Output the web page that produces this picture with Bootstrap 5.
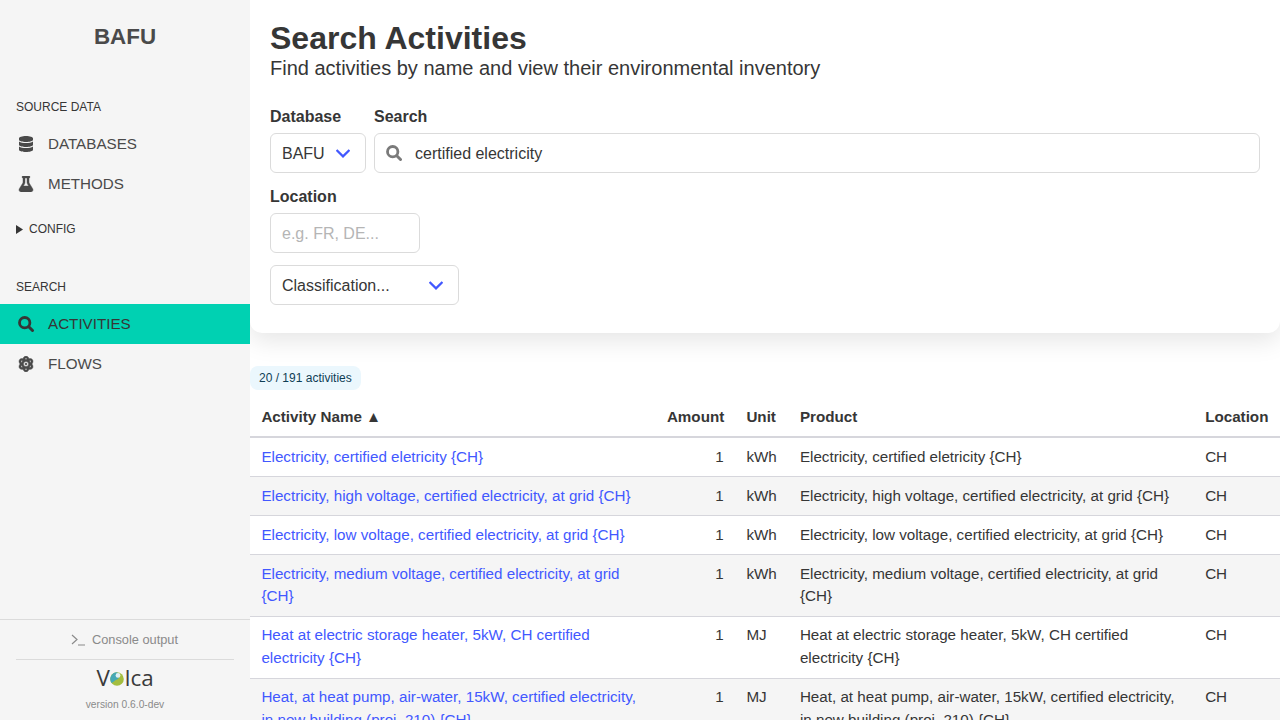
<!DOCTYPE html>
<html lang="en">
<head>
    <meta charset="UTF-8">
    <meta name="viewport" content="width=device-width, initial-scale=1.0">
    <title>Search Activities</title>
    <link rel="stylesheet" href="https://cdn.jsdelivr.net/npm/bootstrap@5.3.0/dist/css/bootstrap.min.css">
    <style>
        html, body {
            height: 100%;
            overflow: hidden;
        }
        body {
            font-family: "Liberation Sans", Arial, sans-serif;
            color: #363636;
            background: #fff;
            font-size: 16px;
            text-rendering: optimizeLegibility;
            -webkit-font-smoothing: antialiased;
        }
        .app-shell {
            height: 720px;
        }
        .side {
            width: 250px;
            background: #f5f5f5;
            color: #4a4a4a;
            position: relative;
            z-index: 1;
        }
        .brand {
            font-size: 22.4px;
            font-weight: 700;
            line-height: 26px;
            padding-top: 24px;
            margin-bottom: 50px;
            color: #4a4a4a;
        }
        .side-label {
            font-size: 12px;
            line-height: 14px;
            padding-left: 16px;
            margin-bottom: 10px;
            color: #363636;
        }
        .side-link {
            height: 40px;
            padding-left: 16px;
            gap: 12px;
            font-size: 15.2px;
            color: #4a4a4a;
            text-decoration: none;
        }
        .side-link svg {
            width: 20px;
            height: 16px;
            fill: #4a4a4a;
        }
        .side-link svg.icon-heavy {
            stroke: #4a4a4a;
            stroke-width: 14;
        }
        .side-link.is-on {
            background: #00d1b2;
            color: #363636;
        }
        .side-link.is-on svg {
            fill: none;
            stroke: #363636;
        }
        .side-config {
            font-size: 12px;
            line-height: 14px;
            padding-left: 16px;
            gap: 5px;
            margin-top: 18px;
            margin-bottom: 44px;
            color: #363636;
        }
        .side-foot {
            border-top: 1px solid #dbdbdb;
            padding: 0 16px;
        }
        .console-line {
            height: 40px;
            gap: 7px;
            padding-right: 1px;
            font-size: 12.8px;
            color: #8a8a8a;
            border-bottom: 1px solid #dbdbdb;
        }
        .logo-line {
            padding-top: 2px;
            height: 35px;
            font-family: "Open Sans", "Liberation Sans", sans-serif;
            font-size: 22.4px;
            line-height: 32px;
            color: #3a3a3a;
        }
        .logo-ball {
            width: 14px;
            height: 14px;
            margin: 0 1px 0 0;
            align-self: center;
        }
        .version-line {
            font-size: 10.24px;
            line-height: 12px;
            color: #8a8a8a;
            padding-top: 4px;
            height: 25px;
        }
        .main-area {
            width: 1030px;
            height: 720px;
            overflow-y: auto;
            scrollbar-width: none;
        }
        .search-box {
            height: 333px;
            padding: 20px 20px 0;
            border-radius: 0 0 12px 12px;
            box-shadow: 0 8px 24px rgba(10, 10, 10, .1);
            background: #fff;
        }
        .page-title {
            font-size: 32px;
            line-height: 36px;
            font-weight: 700;
            margin: 0;
            color: #363636;
        }
        .page-sub {
            font-size: 20px;
            line-height: 24px;
            margin: 0 0 25px;
            color: #363636;
        }
        .field-label {
            display: block;
            font-weight: 700;
            line-height: 24px;
            margin-bottom: 4px;
        }
        .field-box {
            height: 40px;
            border: 1px solid #dbdbdb;
            border-radius: 6px;
            background: #fff;
            padding: 1px 11px 0;
            line-height: 38px;
            color: #363636;
            box-shadow: none;
        }
        .field-box::placeholder {
            color: #b5b5b5;
        }
        .field-pick {
            padding-right: 15px;
        }
        .db-pick {
            width: 96px;
        }
        .class-pick {
            width: 189px;
            margin-top: 4px;
        }
        .loc-input {
            width: 150px;
            margin-bottom: 8px;
            outline: none;
        }
        .chev {
            width: 14px;
            height: 9px;
            fill: none;
            stroke: #4258ff;
            stroke-width: 2.2;
        }
        .search-input {
            padding-left: 40px;
            width: 100%;
            outline: none;
        }
        .search-glass {
            position: absolute;
            left: 12px;
            top: 12px;
            width: 16px;
            height: 16px;
            fill: none;
            stroke: #7a7a7a;
        }
        .filter-row {
            margin-bottom: 12px;
        }
        .count-tag {
            background: #ebf7fd;
            color: #0f3e55;
            font-size: 12px;
            line-height: 24px;
            height: 24px;
            padding: 0 9px;
            border-radius: 8px;
        }
        .count-row {
            padding-top: 33px;
            height: 65px;
        }
        .act-table {
            table-layout: fixed;
            width: 1030px;
            border-collapse: collapse;
            font-size: 15.2px;
            line-height: 22.8px;
            margin: 0;
            color: #363636;
        }
        .act-table th {
            font-weight: 700;
            padding: 7.6px 11.4px;
            border-bottom: 2px solid #d6d6dc;
        }
        .act-table td {
            padding: 7.6px 11.4px;
            border-bottom: 1px solid #d6d6dc;
            vertical-align: top;
        }
        .act-table tbody tr:nth-child(even) td {
            background: #f5f5f5;
        }
        .act-table a {
            color: #4258ff;
            text-decoration: none;
        }
        .c-name { width: 405.5px; }
        .c-amount { width: 79.5px; }
        .c-unit { width: 53.5px; }
        .c-product { width: 405.25px; }
        .c-loc { width: 86.25px; }
    </style>
</head>
<body>
    <div class="app-shell d-flex">
        <!-- sidebar -->
        <div class="side d-flex flex-column flex-shrink-0">
            <div class="brand text-center">BAFU</div>
            <div class="side-label">SOURCE DATA</div>
            <a class="side-link d-flex align-items-center" href="#">
                <svg viewBox="0 0 448 512"><path d="M448 73.143v45.714C448 159.143 347.667 192 224 192S0 159.143 0 118.857V73.143C0 32.857 100.333 0 224 0s224 32.857 224 73.143zM448 176v102.857C448 319.143 347.667 352 224 352S0 319.143 0 278.857V176c48.125 33.143 136.208 48.572 224 48.572S399.874 209.143 448 176zm0 160v102.857C448 479.143 347.667 512 224 512S0 479.143 0 438.857V336c48.125 33.143 136.208 48.572 224 48.572S399.874 369.143 448 336z"/></svg>
                DATABASES
            </a>
            <a class="side-link d-flex align-items-center" href="#">
                <svg class="icon-heavy" viewBox="0 0 448 512"><path d="M288 0H160 128C110.3 0 96 14.3 96 32s14.3 32 32 32V196.8c0 11.8-3.3 23.5-9.5 33.5L10.3 406.2C3.6 417.2 0 429.7 0 442.6C0 480.9 31.1 512 69.4 512H378.6c38.3 0 69.4-31.1 69.4-69.4c0-12.8-3.6-25.4-10.3-36.4L329.5 230.4c-6.2-10.1-9.5-21.7-9.5-33.5V64c17.7 0 32-14.3 32-32s-14.3-32-32-32H288zM192 196.8V64h64V196.8c0 23.7 6.6 46.9 19 67.1L309.5 320h-171L173 263.9c12.4-20.2 19-43.4 19-67.1z"/></svg>
                METHODS
            </a>
            <div class="side-config d-flex align-items-center">
                <svg width="8" height="9" viewBox="0 0 8 9"><path d="M0 0l7 4.5L0 9z" fill="#363636"/></svg>
                CONFIG
            </div>
            <div class="side-label">SEARCH</div>
            <a class="side-link is-on d-flex align-items-center" href="#">
                <svg viewBox="0 0 16 16" stroke-linecap="round"><circle cx="6.7" cy="6.7" r="5.2" stroke-width="2.8"/><path d="M10.8 10.8l3.7 3.7" stroke-width="3"/></svg>
                ACTIVITIES
            </a>
            <a class="side-link d-flex align-items-center" href="#">
                <svg class="icon-heavy" viewBox="0 0 512 512"><path d="M256 398.8c-11.8 5.1-23.4 9.7-34.9 13.5c16.7 33.8 31 35.7 34.9 35.7s18.1-1.9 34.9-35.7c-11.4-3.9-23.1-8.4-34.9-13.5zM446 256c33 45.2 44.3 90.9 23.6 128c-20.2 36.3-62.5 49.3-115.2 43.2c-22 52.1-55.6 84.8-98.4 84.8s-76.4-32.7-98.4-84.8c-52.7 6.1-95-6.8-115.2-43.2C21.7 346.9 33 301.2 66 256c-33-45.2-44.3-90.9-23.6-128c20.2-36.3 62.5-49.3 115.2-43.2C179.6 32.7 213.2 0 256 0s76.4 32.7 98.4 84.8c52.7-6.1 95 6.8 115.2 43.2c20.7 37.1 9.4 82.8-23.6 128zm-65.8 67.4c-1.7 14.2-3.9 28-6.7 41.2c31.8 1.4 38.6-8.7 40.2-11.7c2.3-4.2 7-17.9-11.9-48.1c-6.8 6.3-14 12.5-21.6 18.6zm-6.7-175.9c2.8 13.1 5 26.9 6.7 41.2c7.6 6.1 14.8 12.3 21.6 18.6c18.9-30.2 14.2-44 11.9-48.1c-1.6-2.9-8.4-13-40.2-11.7zM290.9 99.7C274.1 65.9 259.9 64 256 64s-18.1 1.9-34.9 35.7c11.4 3.9 23.1 8.4 34.9 13.5c11.8-5.1 23.4-9.7 34.9-13.5zm-159 88.9c1.7-14.3 3.9-28 6.7-41.2c-31.8-1.4-38.6 8.7-40.2 11.7c-2.3 4.2-7 17.9 11.9 48.1c6.8-6.3 14-12.5 21.6-18.6zM110.2 304.8C91.4 335 96 348.7 98.3 352.9c1.6 2.9 8.4 13 40.2 11.7c-2.8-13.1-5-26.9-6.7-41.2c-7.6-6.1-14.8-12.3-21.6-18.6zM336 256a80 80 0 1 0 -160 0 80 80 0 1 0 160 0zm-80-32a32 32 0 1 1 0 64 32 32 0 1 1 0-64z"/></svg>
                FLOWS
            </a>
            <div class="side-foot mt-auto">
                <div class="console-line d-flex align-items-center justify-content-center">
                    <svg width="14" height="12" viewBox="0 0 14 12" fill="none" stroke="#8a8a8a" stroke-width="1.2"><path d="M1 1l5 4.5L1 10M7 11h7"/></svg>
                    Console output
                </div>
                <div class="logo-line d-flex justify-content-center">
                    <span>V</span>
                    <svg class="logo-ball" viewBox="0 0 14 14">
                        <circle cx="7" cy="7" r="6.8" fill="#a3bd3f"/>
                        <path d="M7 .2A6.8 6.8 0 0 0 1.6 11c2-.6 3-3 5.4-3.6 2.4-.6 3.2-4.6 0-7.2z" fill="#45a9b5"/>
                        <circle cx="8" cy="3.4" r="2.4" fill="#dff1f3"/>
                    </svg>
                    <span>lca</span>
                </div>
                <div class="version-line text-center">version 0.6.0-dev</div>
            </div>
        </div>
        <!-- main -->
        <div class="main-area">
            <div class="search-box">
                <h1 class="page-title">Search Activities</h1>
                <p class="page-sub">Find activities by name and view their environmental inventory</p>
                <div class="filter-row d-flex gap-2">
                    <div>
                        <label class="field-label">Database</label>
                        <div class="field-box field-pick db-pick d-flex align-items-center justify-content-between">BAFU
                            <svg class="chev" viewBox="0 0 14 9"><path d="M.6 1l6.4 6.4L13.4 1"/></svg>
                        </div>
                    </div>
                    <div class="flex-grow-1">
                        <label class="field-label">Search</label>
                        <div class="position-relative">
                            <input class="field-box search-input d-block" type="text" value="certified electricity">
                            <svg class="search-glass" viewBox="0 0 16 16" stroke-linecap="round"><circle cx="6.7" cy="6.7" r="5.2" stroke-width="2.8"/><path d="M10.8 10.8l3.7 3.7" stroke-width="3"/></svg>
                        </div>
                    </div>
                </div>
                <label class="field-label">Location</label>
                <input class="field-box d-block loc-input" type="text" placeholder="e.g. FR, DE...">
                <div class="field-box field-pick class-pick d-inline-flex align-items-center justify-content-between">Classification...
                    <svg class="chev" viewBox="0 0 14 9"><path d="M.6 1l6.4 6.4L13.4 1"/></svg>
                </div>
            </div>
            <div class="count-row d-flex align-items-start"><span class="count-tag">20 / 191 activities</span></div>
            <table class="act-table">
                <colgroup>
                    <col class="c-name"><col class="c-amount"><col class="c-unit"><col class="c-product"><col class="c-loc">
                </colgroup>
                <thead>
                    <tr><th>Activity Name ▲</th><th class="text-end">Amount</th><th>Unit</th><th>Product</th><th>Location</th></tr>
                </thead>
                <tbody>
                    <tr><td><a href="#">Electricity, certified eletricity {CH}</a></td><td class="text-end">1</td><td>kWh</td><td>Electricity, certified eletricity {CH}</td><td>CH</td></tr>
                    <tr><td><a href="#">Electricity, high voltage, certified electricity, at grid {CH}</a></td><td class="text-end">1</td><td>kWh</td><td>Electricity, high voltage, certified electricity, at grid {CH}</td><td>CH</td></tr>
                    <tr><td><a href="#">Electricity, low voltage, certified electricity, at grid {CH}</a></td><td class="text-end">1</td><td>kWh</td><td>Electricity, low voltage, certified electricity, at grid {CH}</td><td>CH</td></tr>
                    <tr><td><a href="#">Electricity, medium voltage, certified electricity, at grid {CH}</a></td><td class="text-end">1</td><td>kWh</td><td>Electricity, medium voltage, certified electricity, at grid {CH}</td><td>CH</td></tr>
                    <tr><td><a href="#">Heat at electric storage heater, 5kW, CH certified electricity {CH}</a></td><td class="text-end">1</td><td>MJ</td><td>Heat at electric storage heater, 5kW, CH certified electricity {CH}</td><td>CH</td></tr>
                    <tr><td><a href="#">Heat, at heat pump, air-water, 15kW, certified electricity, in new building (proj. 210) {CH}</a></td><td class="text-end">1</td><td>MJ</td><td>Heat, at heat pump, air-water, 15kW, certified electricity, in new building (proj. 210) {CH}</td><td>CH</td></tr>
                </tbody>
            </table>
        </div>
    </div>
    <script src="https://cdn.jsdelivr.net/npm/bootstrap@5.3.0/dist/js/bootstrap.bundle.min.js"></script>
</body>
</html>
